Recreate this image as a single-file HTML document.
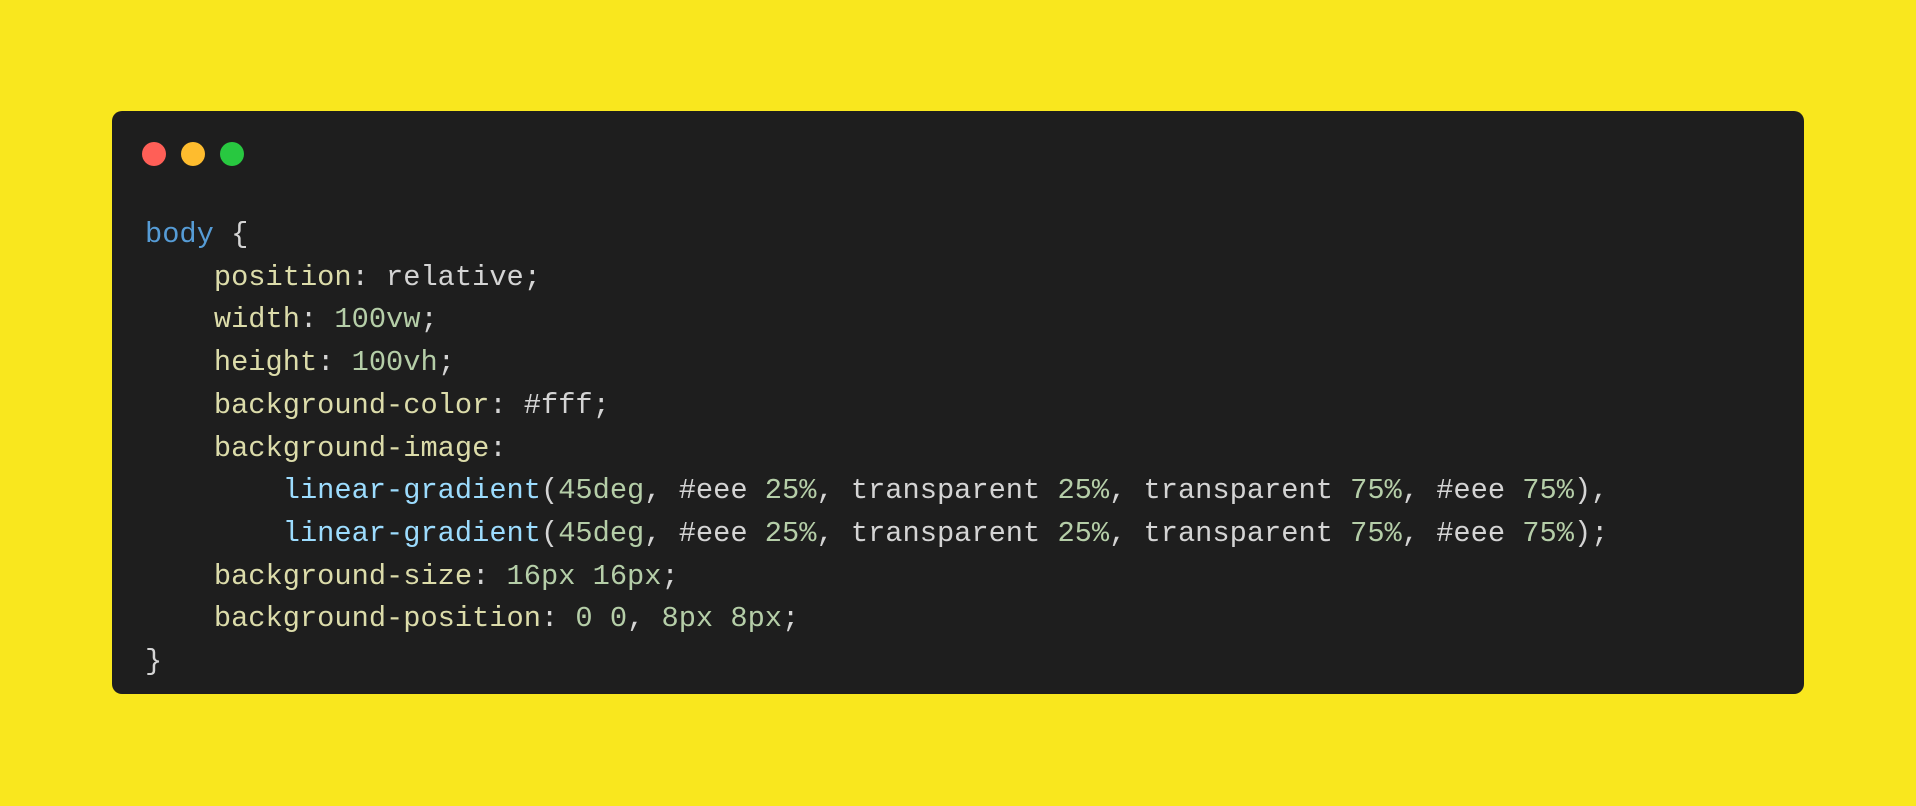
<!DOCTYPE html>
<html><head><meta charset="utf-8"><style>
html,body{margin:0;padding:0;width:1916px;height:806px;background:#f9e71e;overflow:hidden}
.card{position:absolute;left:112px;top:111px;width:1692px;height:583px;background:#1e1e1e;border-radius:10px}
.dot{position:absolute;top:142px;width:24px;height:24px;border-radius:50%}
pre{position:absolute;left:145px;top:214px;margin:0;font-family:"Liberation Mono",monospace;font-size:28.7px;line-height:42.7px;color:#d4d4d4;white-space:pre}
.k{color:#569cd6}.p{color:#dcdcaa}.n{color:#b5cea8}.f{color:#9cdcfe}
</style></head><body>
<div class="card"></div>
<div class="dot" style="left:142px;background:#ff5f57"></div>
<div class="dot" style="left:181px;background:#febc2e"></div>
<div class="dot" style="left:220px;background:#28c840"></div>
<pre><span class="k">body</span> {
    <span class="p">position</span>: relative;
    <span class="p">width</span>: <span class="n">100vw</span>;
    <span class="p">height</span>: <span class="n">100vh</span>;
    <span class="p">background-color</span>: #fff;
    <span class="p">background-image</span>:
        <span class="f">linear-gradient</span>(<span class="n">45deg</span>, #eee <span class="n">25%</span>, transparent <span class="n">25%</span>, transparent <span class="n">75%</span>, #eee <span class="n">75%</span>),
        <span class="f">linear-gradient</span>(<span class="n">45deg</span>, #eee <span class="n">25%</span>, transparent <span class="n">25%</span>, transparent <span class="n">75%</span>, #eee <span class="n">75%</span>);
    <span class="p">background-size</span>: <span class="n">16px 16px</span>;
    <span class="p">background-position</span>: <span class="n">0 0</span>, <span class="n">8px 8px</span>;
}</pre>
</body></html>
